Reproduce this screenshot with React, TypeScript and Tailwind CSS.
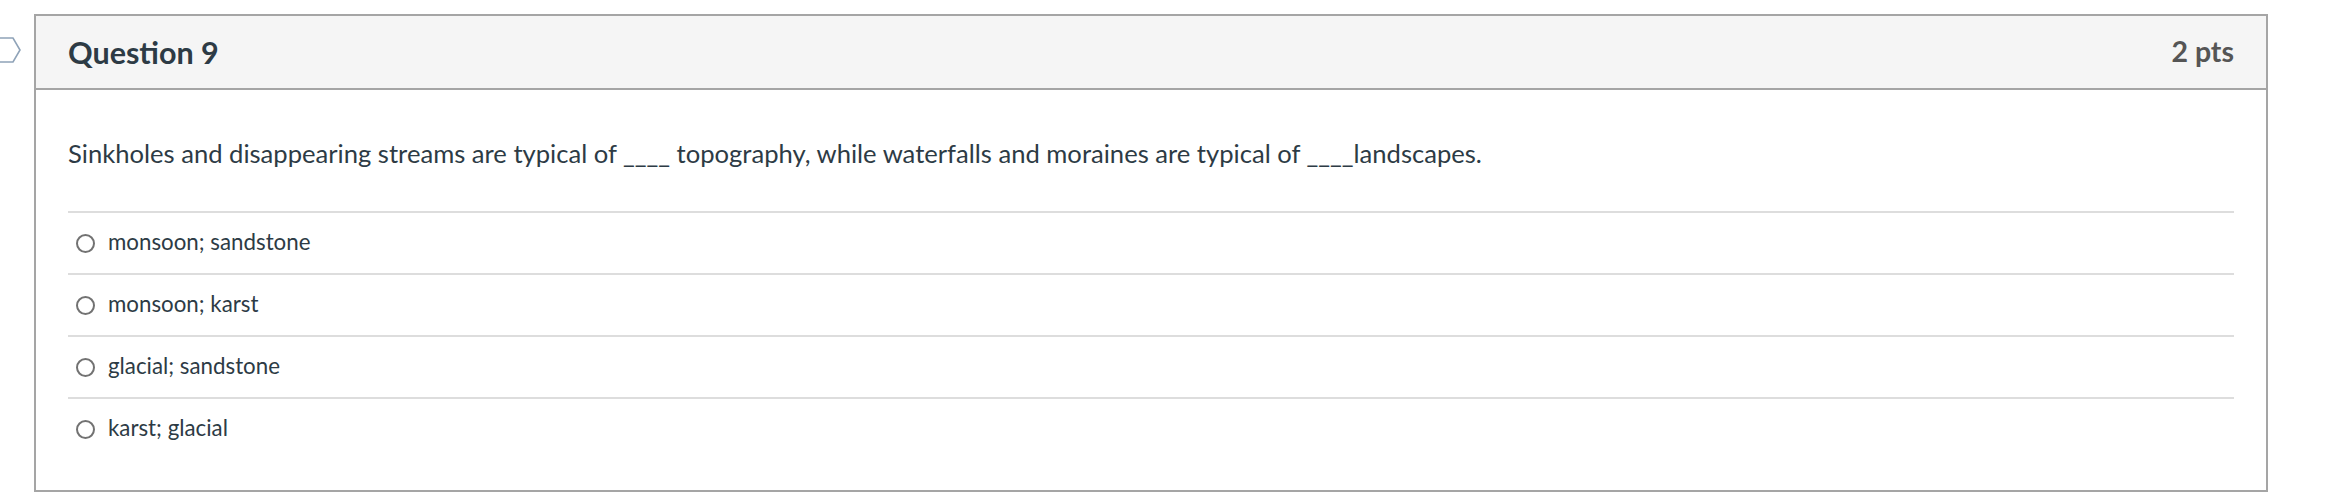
import React from 'react';

const answers = ['monsoon; sandstone', 'monsoon; karst', 'glacial; sandstone', 'karst; glacial'];

const FlagMarker = () => (
  <svg width="22" height="28" viewBox="0 0 22 28" className="mt-[22px] shrink-0">
    <path d="M-2 2 H13 L20 14 L13 26 H-2" fill="none" stroke="#8fa3b8" strokeWidth="1.6" />
  </svg>
);

export default function App() {
  return (
    <div className="bg-white w-[2330px] h-[502px] font-['Lato',sans-serif] text-[#2d3b45]">
      <div className="flex items-start pt-[14px]">
        <FlagMarker />
        <div className="ml-[12px] w-[2234px] border-2 border-[#a5a5a5]">
          {/* Header */}
          <div className="h-[74px] bg-[#f5f5f5] border-b-2 border-[#a5a5a5] flex items-center justify-between px-8">
            <h3 className="text-[30.5px] font-bold leading-none">Question 9</h3>
            <span className="text-[28.5px] font-bold leading-none text-[#555555] -mt-[2px]">2 pts</span>
          </div>

          {/* Body */}
          <div className="px-8 pt-[44px] pb-[31px]">
            <p className="text-[25.6px] leading-[39px] pb-[38px]">
              Sinkholes and disappearing streams are typical of ____ topography, while waterfalls and moraines are typical of ____landscapes.
            </p>
            <div>
              {answers.map((a) => (
                <div key={a} className="border-t-2 border-[#dddddd] h-[62px] flex items-center pl-2">
                  <span className="w-[19px] h-[19px] rounded-full border-2 border-[#727272] bg-white shrink-0" />
                  <span className="ml-[13px] text-[22.3px] leading-none -mt-[1px]">{a}</span>
                </div>
              ))}
            </div>
          </div>
        </div>
      </div>
    </div>
  );
}
